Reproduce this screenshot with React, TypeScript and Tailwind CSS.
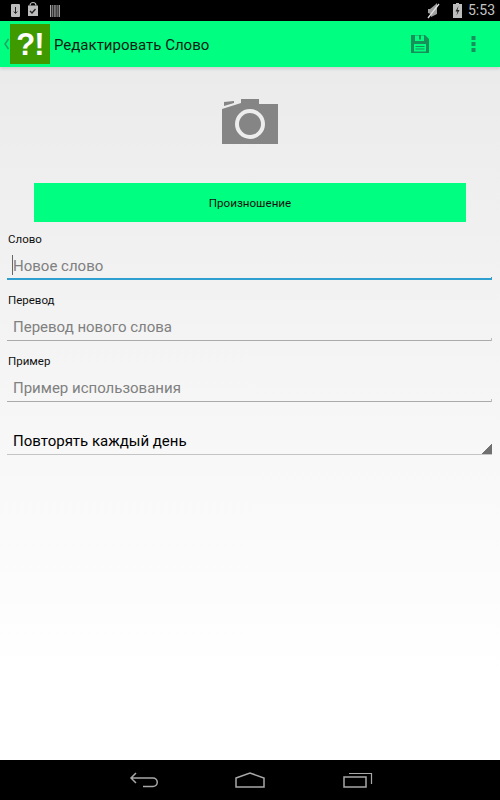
import React from "react";

function Field({ label, hint, active, caret }: { label: string; hint: string; active?: boolean; caret?: boolean }) {
  return (
    <div className="h-[61px] flex flex-col">
      <div className="h-[19px] pl-[8px] pt-[2px] text-[11.5px] leading-[14px] text-[#111]">{label}</div>
      <div className="relative h-[32px] ml-[7px] mr-[8px] pl-[6px] pt-[7px] text-[15px] leading-[20px] text-[#808080]">
        {caret && <span className="absolute left-[5px] top-[6px] w-px h-[20px] bg-[#666]" />}
        {hint}
        <span className={`absolute left-0 right-0 bottom-[1px] ${active ? "h-[2px] bg-[#2f9fd0]" : "h-px bg-[#aaa]"}`} />
        <span className={`absolute right-0 bottom-[1px] w-px h-[3px] ${active ? "bg-[#2f9fd0]" : "bg-[#bbb]"}`} />
      </div>
    </div>
  );
}

export default function App() {
  return (
    <div className="w-[500px] h-[800px] flex flex-col overflow-hidden font-['Roboto',sans-serif] bg-white">
      <div className="h-[21px] bg-black flex items-center pl-[10px] pr-[5px] shrink-0">
        <svg width="60" height="21" viewBox="0 0 60 21">
          <rect x="1" y="4" width="9" height="13" rx="1" fill="#bdbdbd" />
          <path d="M5.500 7v6M3.800 11.500l1.700 2 1.700-2" stroke="#222" strokeWidth="1" fill="none" />
          <path d="M20 5.500a3 3 0 0 1 6 0" stroke="#bdbdbd" strokeWidth="1.200" fill="none" />
          <rect x="18" y="5.500" width="10" height="10.500" fill="#bdbdbd" />
          <path d="M20 11l2 2 3.500-4" stroke="#222" strokeWidth="1.300" fill="none" />
          <path d="M40 5h1.300v12H40zM42.300 5h1v12h-1zM44.300 5h1.300v12h-1.300zM46.600 5h1v12h-1zM48.600 5h1.300v12h-1.300z" fill="#a8a8a8" />
        </svg>
        <div className="ml-auto flex items-center text-[#bdbdbd]">
          <svg width="16" height="17" viewBox="0 0 16 17" className="mr-[12px]">
            <path d="M12 1L10 3 5 7H3v4l3 1v3l6-3z" fill="#a0a0a0" />
            <path d="M14 2L3 16" stroke="#e0e0e0" strokeWidth="1.300" />
          </svg>
          <svg width="9" height="15" viewBox="0 0 9 15" className="mr-[6px]">
            <path d="M3 0h3v1h3v14H0V1h3z" fill="#bdbdbd" />
            <path d="M5.500 3L2.500 8.500h2L3.500 12.500l3-5.500h-2z" fill="#222" />
          </svg>
          <span className="text-[14px] leading-[21px] text-[#c4c4c4]">5:53</span>
        </div>
      </div>

      <div className="h-[46px] bg-[#00ff80] flex items-center shrink-0 relative z-10 shadow-[0_2px_3px_rgba(0,0,0,0.12)]">
        <svg width="7" height="12" viewBox="0 0 7 12" className="ml-[3px]">
          <path d="M5.500 1L2 6l3.500 5" stroke="#1ea862" strokeWidth="1.600" fill="none" />
        </svg>
        <div className="w-[40px] h-[40px] bg-[#3f9a00] flex items-center justify-center text-white font-bold text-[31px] tracking-[-1px] leading-none font-['Liberation_Sans',sans-serif]">
          ?!
        </div>
        <span className="ml-[4px] mt-[2px] text-[15px] text-[#0b2015]">Редактировать Слово</span>
        <div className="ml-auto flex items-center">
          <svg width="20" height="20" viewBox="0 0 20 20" className="mr-[41px]">
            <path fillRule="evenodd" fill="#17905a" d="M1 1h14l4 4v14H1zM5 1.500v5.500h9V1.500h-3v4H9v-4zM4 10v7.500h12V10zM5.500 12h9v1h-9zM5.500 14.500h9v1h-9z" />
          </svg>
          <svg width="5" height="17" viewBox="0 0 5 17" className="mr-[24px]">
            <rect x="0.500" y="0" width="4" height="4" fill="#17905a" />
            <rect x="0.500" y="6" width="4" height="4" fill="#17905a" />
            <rect x="0.500" y="12" width="4" height="4" fill="#17905a" />
          </svg>
        </div>
      </div>

      <div className="flex-1 bg-gradient-to-b from-[#ebebeb] to-[#ffffff] to-[88%] flex flex-col">
        <div className="h-[116px] flex justify-center pt-[32px] shrink-0">
          <svg width="58" height="46" viewBox="0 0 58 46">
            <path d="M3 3L13 2v2L3 7z" fill="#858585" />
            <path fillRule="evenodd" fill="#858585" d="M1 10L20 4V0h18v5h19v40H1zM29 10a15 15 0 1 0 0 30 15 15 0 0 0 0-30z" />
            <circle cx="29" cy="25" r="11" fill="#858585" />
          </svg>
        </div>
        <div className="mx-[34px] h-[39px] bg-[#00ff80] flex items-center justify-center text-[11.6px] text-[#111] shrink-0 pt-[2px]">
          Произношение
        </div>
        <div className="h-[8px] shrink-0" />
        <Field label="Слово" hint="Новое слово" active caret />
        <Field label="Перевод" hint="Перевод нового слова" />
        <Field label="Пример" hint="Пример использования" />
        <div className="relative h-[42px] ml-[7px] mr-[8px] pl-[6px] pt-[18px] text-[15px] leading-[20px] text-black border-b border-[#c4c4c4] shrink-0">
          Повторять каждый день
          <span className="absolute right-0 bottom-0 w-[11px] h-[11px] bg-[linear-gradient(135deg,transparent_50%,#707070_50%)]" />
        </div>
      </div>

      <div className="h-[40px] bg-black shrink-0 flex items-center">
        <svg width="30" height="16" viewBox="0 0 30 16" className="ml-[129px]">
          <path d="M7 1L2 6l5 5M2 6h22a3.500 3.500 0 0 1 0 8.500H14" stroke="#a8a8a8" strokeWidth="1.500" fill="none" />
        </svg>
        <svg width="30" height="16" viewBox="0 0 30 16" className="ml-[76px]">
          <path d="M1 6L15 1l14 5v9H1z" stroke="#a8a8a8" strokeWidth="1.500" fill="none" />
        </svg>
        <svg width="30" height="16" viewBox="0 0 30 16" className="ml-[78px]">
          <rect x="1" y="5" width="22" height="10" stroke="#a8a8a8" strokeWidth="1.500" fill="none" />
          <path d="M6 1.500h22.500V12" stroke="#a8a8a8" strokeWidth="1.200" fill="none" />
        </svg>
      </div>
    </div>
  );
}
